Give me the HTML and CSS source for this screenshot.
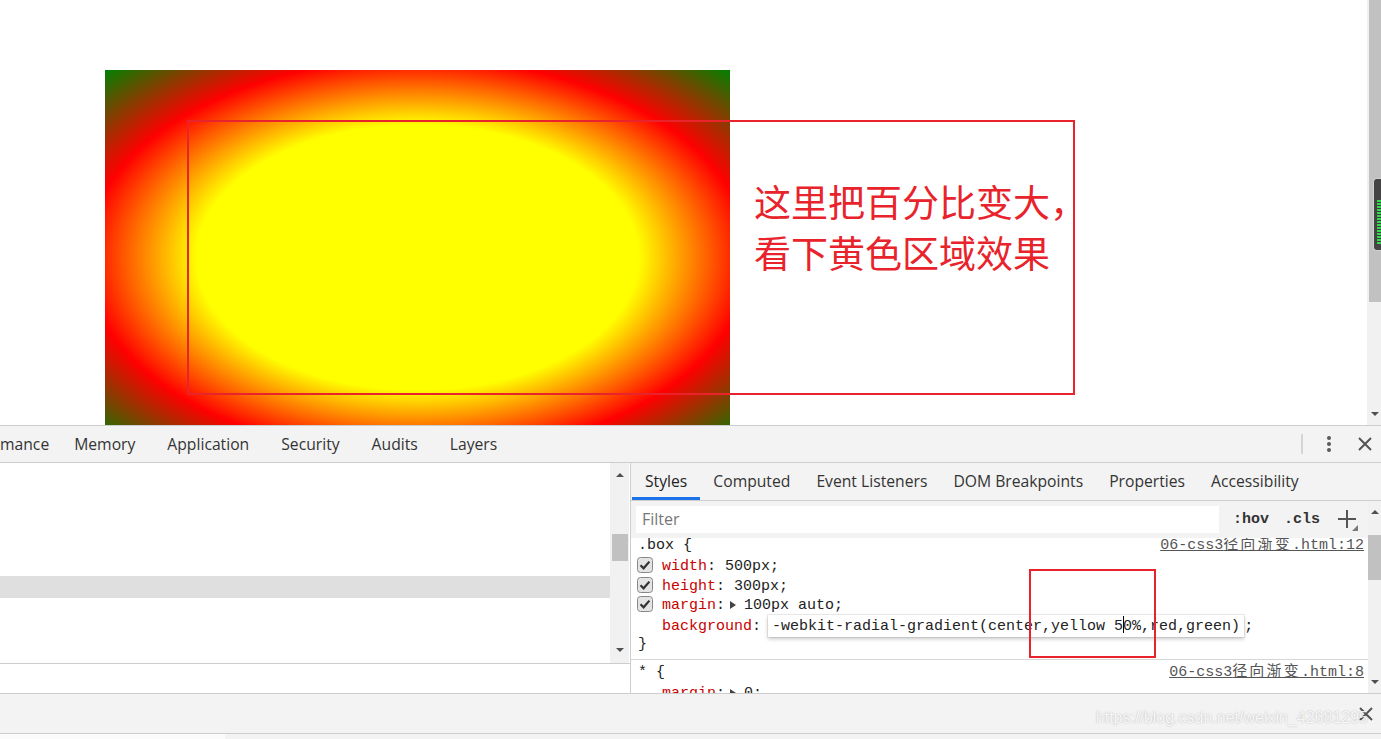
FILE: index.html
```html
<!DOCTYPE html>
<html lang="zh">
<head>
<meta charset="utf-8">
<title>radial gradient</title>
<link rel="stylesheet" href="styles.css">
</head>
<body>
<div class="page">
  <div class="viewport">
    <div class="box"></div>
    <div class="note-frame"></div>
    <div class="note-text">这里把百分比变大，<br>看下黄色区域效果</div>
  </div>
  <div class="page-scroll">
    <div class="ps-thumb"></div>
    <div class="ps-track"><span class="arr-down"></span></div>
    <div class="meter"><div class="meter-bars"></div></div>
  </div>
</div>

<div class="devtools">
  <div class="main-tabs">
    <div class="tab-list">
      <span class="tab first">mance</span>
      <span class="tab">Memory</span>
      <span class="tab">Application</span>
      <span class="tab">Security</span>
      <span class="tab">Audits</span>
      <span class="tab">Layers</span>
    </div>
    <div class="tab-actions">
      <span class="sep"></span>
      <svg class="dots" width="4" height="16" viewBox="0 0 4 16"><circle cx="2" cy="2" r="2" fill="#5a5a5a"/><circle cx="2" cy="8" r="2" fill="#5a5a5a"/><circle cx="2" cy="14" r="2" fill="#5a5a5a"/></svg>
      <svg class="close" width="14" height="14" viewBox="0 0 14 14"><path d="M1 1L13 13M13 1L1 13" stroke="#555" stroke-width="2"/></svg>
    </div>
  </div>

  <div class="panels">
    <div class="elements">
      <div class="tree">
        <div class="tree-body"><div class="row-sel"></div></div>
        <div class="tree-scroll">
          <span class="arr-up"></span>
          <div class="ts-thumb"></div>
          <span class="arr-down"></span>
        </div>
      </div>
      <div class="crumbs"></div>
    </div>

    <div class="sidebar">
      <div class="sub-tabs">
        <span class="stab active">Styles</span>
        <span class="stab">Computed</span>
        <span class="stab">Event Listeners</span>
        <span class="stab">DOM Breakpoints</span>
        <span class="stab">Properties</span>
        <span class="stab">Accessibility</span>
      </div>
      <div class="side-body">
        <div class="side-main">
          <div class="filter-bar">
            <div class="filter-input">Filter</div>
            <span class="fbtn hov">:hov</span>
            <span class="fbtn cls">.cls</span>
            <svg class="plus" width="22" height="22" viewBox="0 0 22 22"><path d="M1 9H19M10 0V18" stroke="#555" stroke-width="2"/><path d="M21 15V21H15Z" fill="#7a7a7a"/></svg>
          </div>
          <div class="rules-wrap">
            <div class="rules">
              <div class="rule">
                <div class="sel-line"><span>.box {</span><span class="src">06-css3<span class="cjk">径向渐变</span>.html:12</span></div>
                <div class="prop"><svg class="cb" width="16" height="16" viewBox="0 0 16 16"><rect x="0.5" y="0.5" width="15" height="15" rx="3" fill="#e4e4e4" stroke="#888"/><path d="M3.5 8.2L6.6 11.3L12.4 4.6" fill="none" stroke="#333" stroke-width="2.2"/></svg><span class="pn">width</span>: 500px;</div>
                <div class="prop"><svg class="cb" width="16" height="16" viewBox="0 0 16 16"><rect x="0.5" y="0.5" width="15" height="15" rx="3" fill="#e4e4e4" stroke="#888"/><path d="M3.5 8.2L6.6 11.3L12.4 4.6" fill="none" stroke="#333" stroke-width="2.2"/></svg><span class="pn">height</span>: 300px;</div>
                <div class="prop"><svg class="cb" width="16" height="16" viewBox="0 0 16 16"><rect x="0.5" y="0.5" width="15" height="15" rx="3" fill="#e4e4e4" stroke="#888"/><path d="M3.5 8.2L6.6 11.3L12.4 4.6" fill="none" stroke="#333" stroke-width="2.2"/></svg><span class="pn">margin</span>:<span class="tri"></span>100px auto;</div>
                <div class="prop nocb"><span class="pn">background</span>:<span class="edit">-webkit-radial-gradient(center,yellow 5<span class="caret"></span>0%,red,green)</span>;</div>
                <div class="close-line">}</div>
              </div>
              <div class="rule">
                <div class="sel-line"><span>* {</span><span class="src">06-css3<span class="cjk">径向渐变</span>.html:8</span></div>
                <div class="prop nocb"><span class="pn">margin</span>:<span class="tri"></span>0;</div>
              </div>
            </div>
          </div>
        </div>
        <div class="side-scroll">
          <span class="arr-up"></span>
          <div class="ss-thumb"></div>
          <span class="arr-down"></span>
        </div>
      </div>
      <div class="hl-frame"></div>
    </div>
  </div>

  <div class="drawer">
    <svg class="close" width="14" height="14" viewBox="0 0 14 14"><path d="M1 1L13 13M13 1L1 13" stroke="#555" stroke-width="2"/></svg>
    <span class="watermark">https://blog.csdn.net/weixin_42681295</span>
  </div>
  <div class="foot"><div class="foot-left"></div></div>
</div>
</body>
</html>
```

FILE: styles.css
```css
* { box-sizing: border-box; }
html, body { margin: 0; padding: 0; }
body {
  width: 1381px;
  height: 739px;
  overflow: hidden;
  background: #fff;
  font-family: "Segoe UI", "Open Sans", "Noto Sans", sans-serif;
}

/* ---------- page viewport ---------- */
.page { height: 425px; display: flex; }
.viewport { flex: 1; position: relative; overflow: hidden; background: #fff; }
.box {
  width: 625px;
  height: 375px;
  margin: 70px 0 0 105px;
  background: radial-gradient(ellipse farthest-corner at center, yellow 50%, red 75%, green 100%);
}
.note-frame {
  position: absolute;
  left: 187px;
  top: 120px;
  width: 888px;
  height: 275px;
  border: 2px solid #e8232b;
}
.note-text {
  position: absolute;
  left: 754px;
  top: 176px;
  font-family: "Noto Sans CJK SC", sans-serif;
  font-size: 37px;
  line-height: 51px;
  color: #e8232b;
  white-space: nowrap;
}

.page-scroll {
  width: 14px;
  position: relative;
  background: #f1f1f1;
  border-left: 2px solid #f1f1f1;
  display: flex;
  flex-direction: column;
}
.ps-thumb { height: 302px; background: #c1c1c1; }
.ps-track {
  flex: 1;
  display: flex;
  align-items: flex-end;
  justify-content: center;
  padding-bottom: 9px;
}
.meter {
  position: absolute;
  left: 4px;
  top: 178px;
  width: 10px;
  height: 73px;
  border-radius: 4px 0 0 4px;
  background: #444;
  border: 1px solid #d0d0d0;
  border-right: 0;
  padding: 21px 0 6px 3px;
}
.meter-bars {
  height: 100%;
  background: repeating-linear-gradient(to bottom, #36d84c 0 2px, #3b3b3b 2px 3px);
}

.arr-down, .arr-up {
  display: block;
  width: 0;
  height: 0;
  border-left: 4px solid transparent;
  border-right: 4px solid transparent;
}
.arr-down { border-top: 4px solid #505050; }
.arr-up { border-bottom: 4px solid #505050; }

/* ---------- devtools ---------- */
.devtools {
  height: 314px;
  background: #f3f3f3;
  display: flex;
  flex-direction: column;
}
.main-tabs {
  height: 38px;
  border-top: 1px solid #cdcdcd;
  border-bottom: 1px solid #cdcdcd;
  display: flex;
  align-items: center;
  justify-content: space-between;
}
.tab-list { display: flex; align-items: center; }
.tab { padding: 0 16px; font-size: 15.7px; color: #333; }
.tab.first { padding-left: 0; padding-right: 9px; }
.tab-actions { display: flex; align-items: center; padding-right: 9px; }
.sep { width: 2px; height: 20px; background: #d4d4d4; margin-right: 24px; }
.dots { margin-right: 27px; }
.close { display: block; }

.panels { height: 230px; display: flex; background: #fff; }
.elements {
  width: 631px;
  border-right: 1px solid #cdcdcd;
  display: flex;
  flex-direction: column;
}
.tree { height: 201px; display: flex; border-bottom: 1px solid #cdcdcd; }
.tree-body { flex: 1; padding-top: 113px; }
.row-sel { height: 22px; background: #dfdfdf; }
.tree-scroll {
  width: 19px;
  margin-right: 1px;
  background: #f1f1f1;
  display: flex;
  flex-direction: column;
  align-items: center;
  padding-top: 10px;
}
.ts-thumb { width: 16px; height: 27px; margin-top: 57px; background: #c1c1c1; }
.tree-scroll .arr-down { margin-top: 87px; }
.crumbs { flex: 1; background: #fff; }

.sidebar { flex: 1; display: flex; flex-direction: column; position: relative; min-width: 0; }
.sub-tabs {
  height: 38px;
  border-bottom: 1px solid #cdcdcd;
  background: #f3f3f3;
  display: flex;
  padding-left: 1px;
}
.stab {
  padding: 2px 13px 0;
  font-size: 15.7px;
  color: #333;
  display: flex;
  align-items: center;
  border-bottom: 3px solid transparent;
  white-space: nowrap;
}
.stab.active { border-bottom-color: #1a73e8; color: #222; }

.side-body { flex: 1; display: flex; min-height: 0; }
.side-main { flex: 1; display: flex; flex-direction: column; min-width: 0; }
.filter-bar {
  height: 37px;
  background: #f3f3f3;
  display: flex;
  align-items: center;
  padding-left: 5px;
}
.filter-input {
  width: 583px;
  height: 27px;
  background: #fff;
  padding-left: 6px;
  font-size: 16px;
  line-height: 27px;
  color: #777;
  margin-right: 14px;
}
.fbtn {
  font-family: "Liberation Mono", monospace;
  font-weight: bold;
  font-size: 15px;
  color: #333;
}
.hov { margin-right: 15px; }
.cls { margin-right: 17px; }
.plus { display: block; margin-top: 2px; }

.rules-wrap { flex: 1; overflow: hidden; background: #fff; }
.rules {
  margin-top: -5px;
  font-family: "Liberation Mono", "Noto Sans CJK SC", monospace;
  font-size: 15px;
  color: #222;
}
.rule { padding: 2px 4px 4px 7px; border-bottom: 1px solid #d6d6d6; }
.sel-line { display: flex; justify-content: space-between; height: 22px; line-height: 21px; }
.src { color: #555; text-decoration: underline; }
.cjk { letter-spacing: 2.2px; }
.prop, .close-line { height: 19.5px; line-height: 19.5px; white-space: nowrap; }
.prop { margin-left: -1px; }
.prop.nocb { padding-left: 25px; }
.cb { display: inline-block; vertical-align: -3px; margin-right: 9px; }
.pn { color: #c80000; }
.tri {
  display: inline-block;
  width: 0;
  height: 0;
  border-left: 6px solid #444;
  border-top: 4px solid transparent;
  border-bottom: 4px solid transparent;
  margin: 0 8px 0 5px;
  vertical-align: 0;
}
.edit {
  display: inline-block;
  margin: -1px 0 -1px 7px;
  padding: 1px 4px 1px 4px;
  line-height: 19.5px;
  background: #fff;
  box-shadow: 0 0 0 1px rgba(0, 0, 0, 0.07), 0 2px 4px rgba(0, 0, 0, 0.22);
}
.caret {
  display: inline-block;
  width: 1px;
  height: 17px;
  background: #000;
  vertical-align: -3px;
  margin-right: -1px;
}

.side-scroll {
  width: 13px;
  background: #f1f1f1;
  display: flex;
  flex-direction: column;
  align-items: center;
  padding-top: 9px;
}
.ss-thumb { width: 13px; height: 45px; margin-top: 21px; background: #c1c1c1; }
.side-scroll .arr-down { margin-top: 100px; }

.hl-frame {
  position: absolute;
  left: 398px;
  top: 106px;
  width: 127px;
  height: 89px;
  border: 2px solid #e8232b;
}

.drawer {
  height: 41px;
  border-top: 1px solid #cdcdcd;
  border-bottom: 1px solid #cdcdcd;
  position: relative;
  display: flex;
  align-items: center;
  justify-content: flex-end;
  padding-right: 8px;
}
.watermark {
  position: absolute;
  right: 13px;
  top: 14px;
  font-family: "Liberation Sans", sans-serif;
  font-size: 16px;
  line-height: 20px;
  color: rgba(255, 255, 255, 0.9);
  text-shadow: 0 0 1.5px rgba(0, 0, 0, 0.3);
  white-space: nowrap;
}
.foot { flex: 1; display: flex; }
.foot-left { width: 225px; background: #fbfbfb; }
```
